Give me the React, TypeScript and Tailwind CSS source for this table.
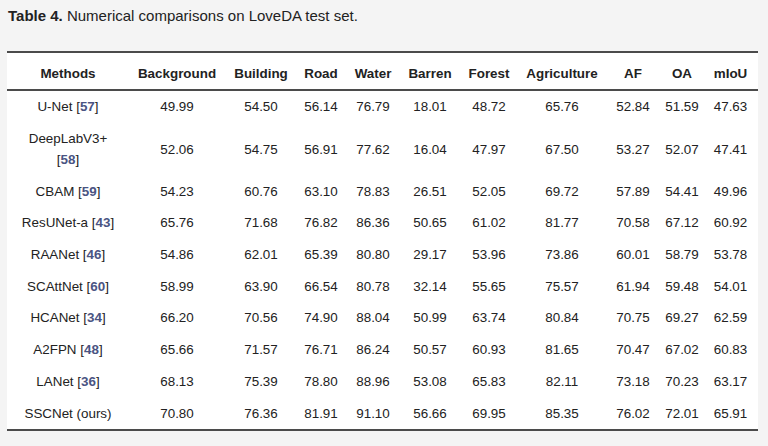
const HEAD = ['Methods', 'Background', 'Building', 'Road', 'Water', 'Barren', 'Forest', 'Agriculture', 'AF', 'OA', 'mIoU'];
const WIDTHS = ['w-[122px]', 'w-[96px]', 'w-[72px]', 'w-[48px]', 'w-[56px]', 'w-[58px]', 'w-[60px]', 'w-[86px]', 'w-[56px]', 'w-[42px]', 'w-[55px]'];

type Row = { name: string; ref?: string; wrap?: boolean; vals: string[] };

const ROWS: Row[] = [
  { name: 'U-Net', ref: '57', vals: ['49.99', '54.50', '56.14', '76.79', '18.01', '48.72', '65.76', '52.84', '51.59', '47.63'] },
  { name: 'DeepLabV3+', ref: '58', wrap: true, vals: ['52.06', '54.75', '56.91', '77.62', '16.04', '47.97', '67.50', '53.27', '52.07', '47.41'] },
  { name: 'CBAM', ref: '59', vals: ['54.23', '60.76', '63.10', '78.83', '26.51', '52.05', '69.72', '57.89', '54.41', '49.96'] },
  { name: 'ResUNet-a', ref: '43', vals: ['65.76', '71.68', '76.82', '86.36', '50.65', '61.02', '81.77', '70.58', '67.12', '60.92'] },
  { name: 'RAANet', ref: '46', vals: ['54.86', '62.01', '65.39', '80.80', '29.17', '53.96', '73.86', '60.01', '58.79', '53.78'] },
  { name: 'SCAttNet', ref: '60', vals: ['58.99', '63.90', '66.54', '80.78', '32.14', '55.65', '75.57', '61.94', '59.48', '54.01'] },
  { name: 'HCANet', ref: '34', vals: ['66.20', '70.56', '74.90', '88.04', '50.99', '63.74', '80.84', '70.75', '69.27', '62.59'] },
  { name: 'A2FPN', ref: '48', vals: ['65.66', '71.57', '76.71', '86.24', '50.57', '60.93', '81.65', '70.47', '67.02', '60.83'] },
  { name: 'LANet', ref: '36', vals: ['68.13', '75.39', '78.80', '88.96', '53.08', '65.83', '82.11', '73.18', '70.23', '63.17'] },
  { name: 'SSCNet (ours)', vals: ['70.80', '76.36', '81.91', '91.10', '56.66', '69.95', '85.35', '76.02', '72.01', '65.91'] },
];

function Ref({ n }: { n: string }) {
  return (
    <>
      [<span className="font-bold text-[#4a5483]">{n}</span>]
    </>
  );
}

export default function App() {
  return (
    <div className="h-[446px] w-[768px] bg-[#f4f4f4] font-['Liberation_Sans',Arial,sans-serif] text-[#222]">
      <p className="pl-[8px] pt-[6px] text-[15px] leading-[20px]">
        <b>Table 4.</b> Numerical comparisons on LoveDA test set.
      </p>
      <div className="ml-[7px] mt-[25px] w-[751px] bg-white">
        <table className="w-full table-fixed border-collapse text-center text-[13.4px] leading-[21px]">
          <colgroup>
            {WIDTHS.map((w, i) => (
              <col key={i} className={w} />
            ))}
          </colgroup>
          <thead>
            <tr className="border-y-2 border-[#4b4b4b]">
              {HEAD.map((h) => (
                <th key={h} className="whitespace-nowrap px-0 pb-[5px] pt-[10px] font-bold">
                  {h}
                </th>
              ))}
            </tr>
          </thead>
          <tbody className="border-b-2 border-[#4b4b4b]">
            {ROWS.map((r) => (
              <tr key={r.name}>
                <td className="whitespace-nowrap py-[5.35px]">
                  {r.name}
                  {r.ref && (
                    <>
                      {r.wrap ? <br /> : ' '}
                      <Ref n={r.ref} />
                    </>
                  )}
                </td>
                {r.vals.map((v, i) => (
                  <td key={i} className="whitespace-nowrap py-[5.35px]">
                    {v}
                  </td>
                ))}
              </tr>
            ))}
          </tbody>
        </table>
      </div>
    </div>
  );
}
